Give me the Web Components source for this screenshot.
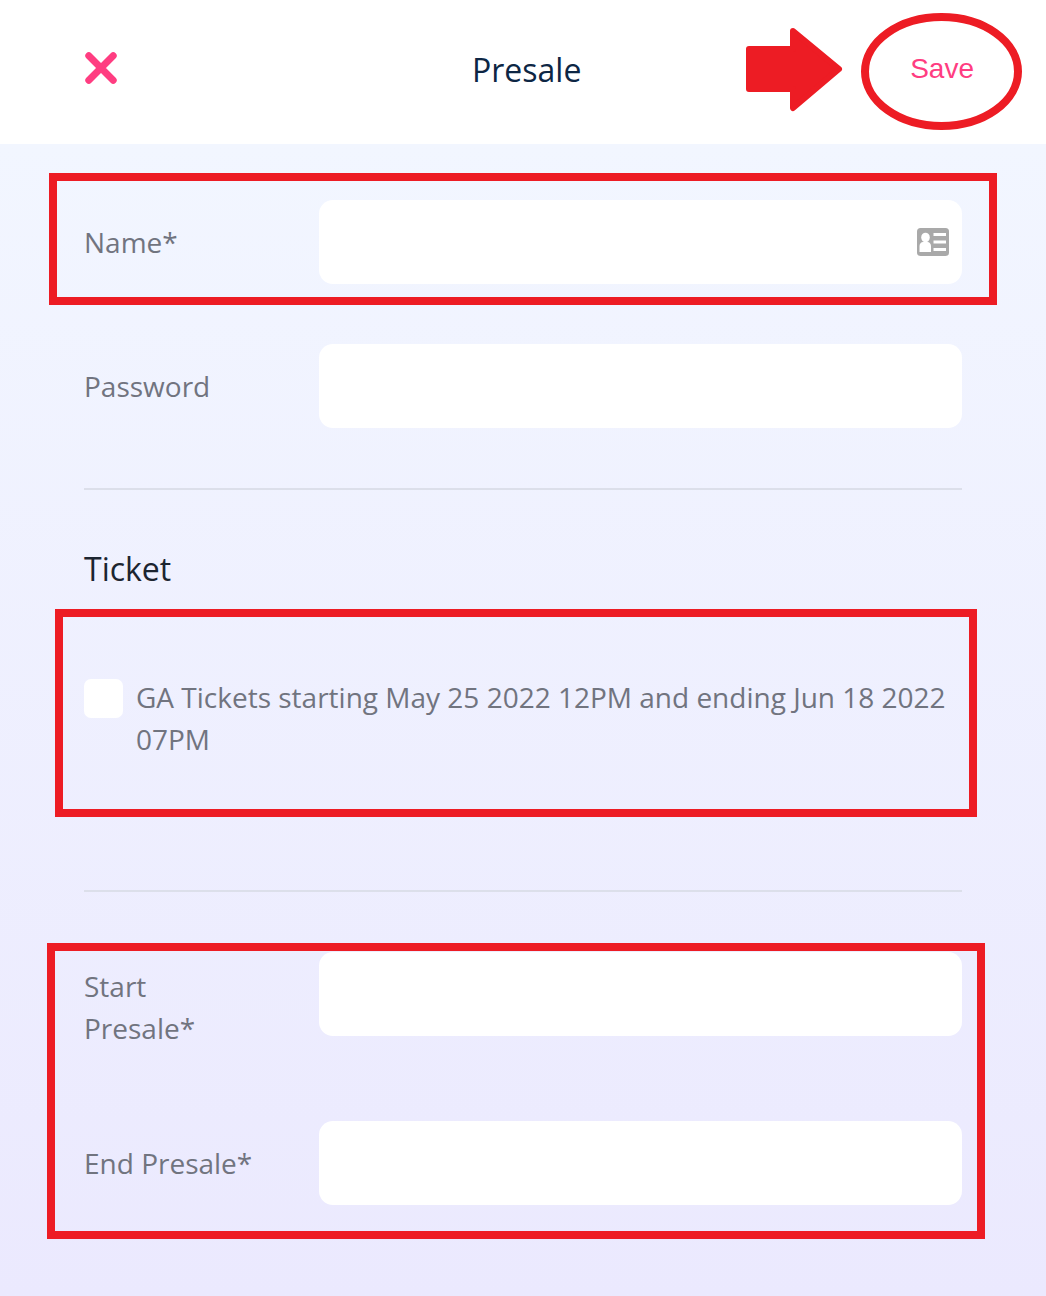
<!DOCTYPE html>
<html lang="en">
<head>
<meta charset="utf-8">
<title>Presale</title>
<style>
  html, body { margin: 0; padding: 0; }
  body { position: relative; width: 1046px; height: 1296px; overflow: hidden; font-family: "Open Sans", sans-serif; }
</style>
</head>
<body>
<presale-page>
  <presale-header slot="header" title-text="Presale"></presale-header>
  <form-row label="Name*"><card-icon slot="icon"></card-icon></form-row>
  <form-row label="Password" style="margin-top:60px"></form-row>
  <form-divider style="margin-top:60px"></form-divider>
  <section-title style="margin-top:58px">Ticket</section-title>
  <ticket-option style="margin-top:89px">GA Tickets starting May 25 2022 12PM and ending Jun 18 2022 07PM</ticket-option>
  <form-divider style="margin-top:130px"></form-divider>
  <form-row label="Start Presale*" style="margin-top:60px; --label-shift:13px"></form-row>
  <form-row label="End Presale*" style="margin-top:72px"></form-row>
</presale-page>

<mark-box style="left:49px;top:173px;width:948px;height:132px"></mark-box>
<mark-box style="left:55px;top:609px;width:922px;height:208px"></mark-box>
<mark-box style="left:47px;top:943px;width:938px;height:296px"></mark-box>
<save-callout></save-callout>

<script>
class PresalePage extends HTMLElement {
  constructor() {
    super()
    this.attachShadow({ mode: 'open' }).innerHTML = `
      <style>
        :host {
          display: block;
          height: 1296px;
          background: linear-gradient(#f2f6ff 144px, #ebe9fe 100%);
        }
        .form {
          display: flex;
          flex-direction: column;
          padding: 56px 84px 0;
        }
      </style>
      <slot name="header"></slot>
      <div class="form"><slot></slot></div>`
  }
}
customElements.define('presale-page', PresalePage)

class PresaleHeader extends HTMLElement {
  constructor() {
    super()
    this.attachShadow({ mode: 'open' }).innerHTML = `
      <style>
        :host {
          display: grid;
          grid-template-columns: 388px auto 1fr;
          align-items: center;
          height: 144px;
          padding: 0 72px 0 84px;
          background: #fff;
        }
        svg { display: block; }
        h1 {
          margin: -5px 0 0 0;
          font: 400 32px/42px "Open Sans", sans-serif;
          color: #0d2644;
        }
        .save {
          justify-self: end;
          margin-top: -6px;
          font: 400 28px/32px "Liberation Sans", Arial, sans-serif;
          color: #ff3d81;
        }
      </style>
      <svg width="34" height="34" viewBox="0 0 34 34" style="margin-top:-8px">
        <path d="M4.800 4.800 L29.200 29.200 M29.200 4.800 L4.800 29.200" stroke="#ff3d81" stroke-width="7" stroke-linecap="round" fill="none"/>
      </svg>
      <h1></h1>
      <span class="save">Save</span>`
    this.shadowRoot.querySelector('h1').textContent = this.getAttribute('title-text')
  }
}
customElements.define('presale-header', PresaleHeader)

class FormRow extends HTMLElement {
  constructor() {
    super()
    this.attachShadow({ mode: 'open' }).innerHTML = `
      <style>
        :host {
          display: grid;
          grid-template-columns: 235px 1fr;
          align-items: start;
        }
        label {
          align-self: center;
          margin-top: var(--label-shift, 0);
          width: 175px;
          font: 400 28px/42px "Open Sans", sans-serif;
          color: #71747f;
        }
        .field {
          display: flex;
          align-items: center;
          justify-content: flex-end;
          height: 84px;
          padding: 0 13px;
          box-sizing: border-box;
          background: #fff;
          border-radius: 14px;
        }
      </style>
      <label></label>
      <div class="field"><slot name="icon"></slot></div>`
    this.shadowRoot.querySelector('label').textContent = this.getAttribute('label')
  }
}
customElements.define('form-row', FormRow)

class CardIcon extends HTMLElement {
  constructor() {
    super()
    this.attachShadow({ mode: 'open' }).innerHTML = `
      <style>
        :host { display: block; height: 28px; }
        svg { display: block; }
      </style>
      <svg width="32" height="28" viewBox="0 0 32 28">
        <rect width="32" height="28" rx="3.500" fill="#a9a9a9"/>
        <ellipse cx="8.500" cy="9.500" rx="4.300" ry="4.800" fill="#fff"/>
        <path d="M2.500 24 v-6 c0-2 1.500-4 3.500-4 h4.500 c2 0 3.500 2 3.500 4 v6 z" fill="#fff"/>
        <path d="M16.500 5 h12.500 v3 h-12.500z M16.500 12.500 h12.500 v3 h-12.500z M16.500 20 h12.500 v3 h-12.500z" fill="#fff"/>
      </svg>`
  }
}
customElements.define('card-icon', CardIcon)

class FormDivider extends HTMLElement {
  constructor() {
    super()
    this.attachShadow({ mode: 'open' }).innerHTML = `
      <style>
        :host { display: block; height: 2px; background: #dcdfea; }
      </style>`
  }
}
customElements.define('form-divider', FormDivider)

class SectionTitle extends HTMLElement {
  constructor() {
    super()
    this.attachShadow({ mode: 'open' }).innerHTML = `
      <style>
        :host {
          display: block;
          font: 400 32px/42px "Open Sans", sans-serif;
          color: #1c2530;
        }
      </style>
      <slot></slot>`
  }
}
customElements.define('section-title', SectionTitle)

class TicketOption extends HTMLElement {
  constructor() {
    super()
    this.attachShadow({ mode: 'open' }).innerHTML = `
      <style>
        :host {
          display: flex;
          gap: 13px;
          align-items: flex-start;
          font: 400 28px/42px "Open Sans", sans-serif;
          color: #71747f;
        }
        .box {
          flex: none;
          width: 39px;
          height: 39px;
          background: #fff;
          border-radius: 7px;
        }
        .text { margin-top: -3px; }
      </style>
      <div class="box"></div>
      <div class="text"><slot></slot></div>`
  }
}
customElements.define('ticket-option', TicketOption)

// annotations painted over the screenshot
class MarkBox extends HTMLElement {
  constructor() {
    super()
    this.attachShadow({ mode: 'open' }).innerHTML = `
      <style>
        :host {
          position: absolute;
          box-sizing: border-box;
          border: 8px solid #ed1c24;
        }
      </style>`
  }
}
customElements.define('mark-box', MarkBox)

class SaveCallout extends HTMLElement {
  constructor() {
    super()
    this.attachShadow({ mode: 'open' }).innerHTML = `
      <style>
        :host { position: absolute; left: 0; top: 0; width: 1046px; height: 144px; pointer-events: none; }
        svg { display: block; }
      </style>
      <svg width="1046" height="144" viewBox="0 0 1046 144">
        <ellipse cx="941.500" cy="71.500" rx="76.500" ry="54.500" fill="none" stroke="#ed1c24" stroke-width="8"/>
        <path d="M749 49 H793 V31 L839 69 L793 108 V89 H749 Z" fill="#ed1c24" stroke="#ed1c24" stroke-width="6" stroke-linejoin="round"/>
      </svg>`
  }
}
customElements.define('save-callout', SaveCallout)
</script>
</body>
</html>
